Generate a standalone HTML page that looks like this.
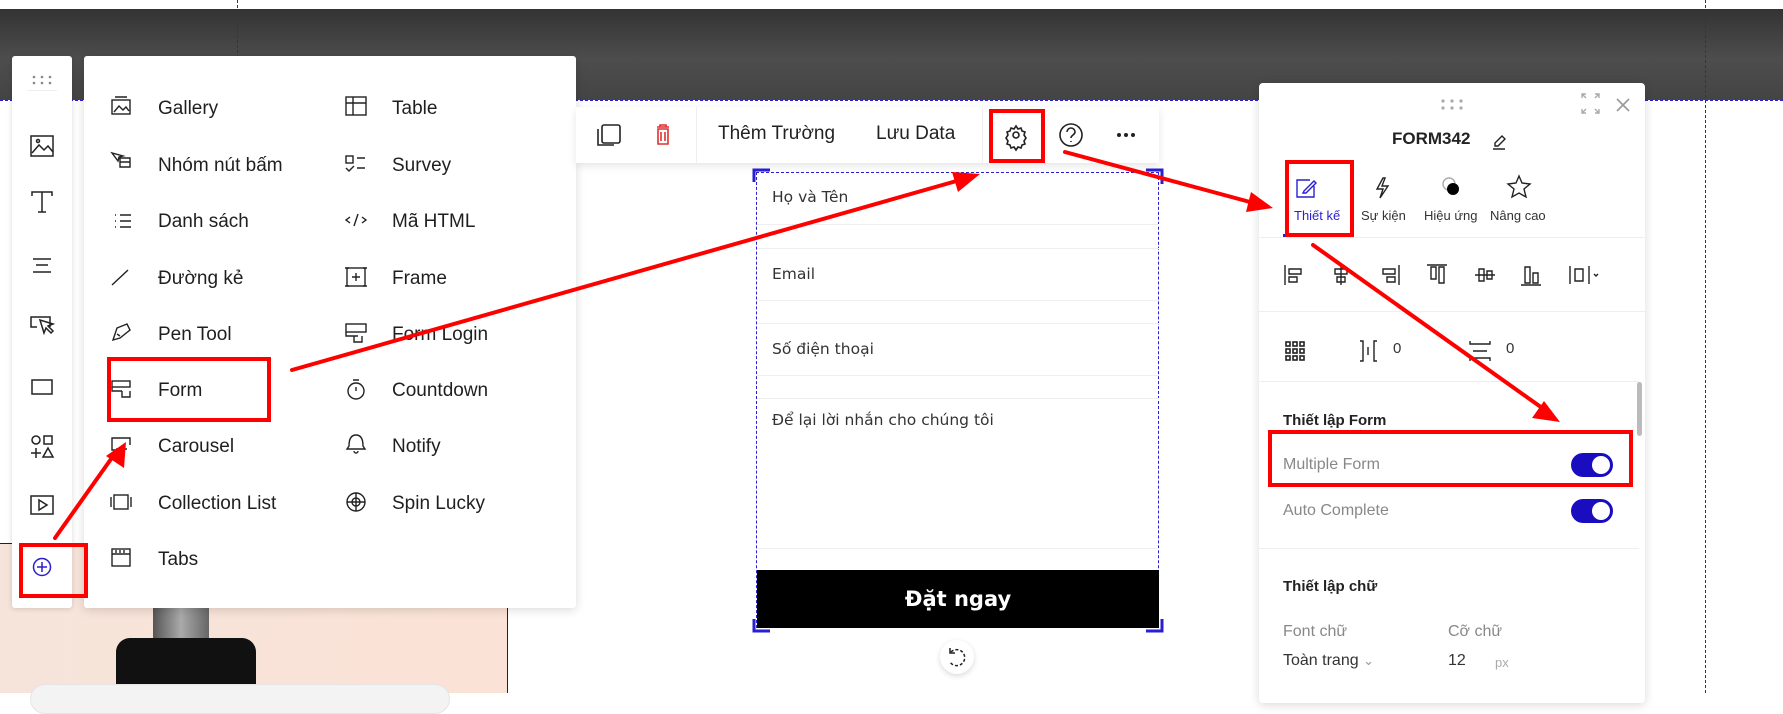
<!DOCTYPE html>
<html><head><meta charset="utf-8">
<style>
*{margin:0;padding:0;box-sizing:border-box}
body{width:1783px;height:693px;overflow:hidden;background:#fff;position:relative;font-family:"Liberation Sans",sans-serif;color:#222}
.a{position:absolute}
.mi{position:absolute;font-size:19px;color:#1f1f1f;line-height:22px}
.ff{position:absolute;left:772px;font-family:"DejaVu Sans","Liberation Sans",sans-serif;font-size:15.5px;color:#333}
.hl{position:absolute;left:757px;width:402px;height:1px;background:#eee}
.tl{position:absolute;font-size:13px;color:#333;top:208px}
.gr{color:#888}
</style></head><body>
<div class="a" style="left:0;top:9px;width:1783px;height:91px;background:linear-gradient(180deg,#333,#4d4d4d 55%,#444)"></div>
<div class="a" style="left:0;top:100px;width:1783px;border-top:1px dashed #2a1fd0"></div>
<div class="a" style="left:237px;top:0;height:693px;border-left:1px dashed #2a1fd0"></div>
<div class="a" style="left:1705px;top:0;height:693px;border-left:1px dashed #2a1fd0"></div>
<div class="a" style="left:0;top:543px;width:508px;height:150px;background:linear-gradient(90deg,#f6e4da,#fbe2d6);border-top:1px solid #222;border-right:1px solid #222"></div>
<div class="a" style="left:153px;top:606px;width:56px;height:32px;background:linear-gradient(90deg,#555,#aaa,#666)"></div>
<div class="a" style="left:116px;top:638px;width:140px;height:60px;background:#111;border-radius:14px 14px 0 0"></div>
<div class="a" style="left:30px;top:684px;width:420px;height:30px;background:#f3f3f3;border-radius:16px;border:1px solid #e5e5e5"></div>
<div class="a" style="left:12px;top:56px;width:60px;height:552px;background:#fff;border-radius:3px;box-shadow:0 1px 6px rgba(0,0,0,.15)"></div>
<div class="a" style="left:27px;top:90px;width:30px;height:1px;background:#eee"></div>
<svg class="a" style="left:0;top:0" width="90" height="600" fill="none" stroke="#222" stroke-width="1.5">
<g fill="#888" stroke="none"><circle cx="34" cy="77" r="1.3"/><circle cx="42" cy="77" r="1.3"/><circle cx="50" cy="77" r="1.3"/><circle cx="34" cy="83" r="1.3"/><circle cx="42" cy="83" r="1.3"/><circle cx="50" cy="83" r="1.3"/></g>
<rect x="31" y="136" width="22" height="20"/><path d="M32 153l7-8 5 5 4-4 5 6"/><circle cx="38" cy="141" r="1.5"/>
<path d="M32 196v-4h20v4M42 192v20M38 212h8"/>
<path d="M33 259h18M36 265h12M33 272h18"/>
<path d="M50 327v-10H31v10h6M40 320l4 13 2-5 5 5 2-2-5-5 5-2z"/>
<rect x="32" y="380" width="20" height="14"/>
<circle cx="36" cy="440" r="4"/><rect x="44" y="436" width="8" height="8"/><path d="M31 453h10M36 448v10M48 448l-5 9h10z"/>
<rect x="31" y="496" width="22" height="18"/><path d="M39 500v10l8-5z"/>
<circle cx="42" cy="567" r="8.5" stroke="#2a1fd0"/><path d="M42 562v10M37 567h10" stroke="#2a1fd0"/>
</svg>
<div class="a" style="left:84px;top:56px;width:492px;height:552px;background:#fff;border-radius:3px;box-shadow:0 2px 10px rgba(0,0,0,.15)"></div>
<svg class="a" style="left:110px;top:90px" width="300" height="490" fill="none" stroke="#222" stroke-width="1.4">
<rect x="2" y="10" width="18" height="14"/><path d="M5 7h12M4 22l5-6 4 4 3-3 3 4"/>
<path d="M2 63l6 8 1-4 4-1zM10 68h10v9H10zM10 72h10"/>
<path d="M5 125h1M5 131h1M5 137h1M10 125h11M10 131h11M10 137h11" stroke-width="1.6"/>
<path d="M2 195l16-15"/>
<path d="M3 250l4-12 10-4 3 6-10 8zM7 244l3 2"/>
<rect x="2" y="291" width="18" height="6"/><path d="M2 297v4h10M12 301v6h8v-6"/>
<path d="M20 355v-7H2v12h4M6 359h2M11 359h2M15 359h2"/>
<rect x="4" y="405" width="14" height="14"/><path d="M1 407v10M21 407v10"/>
<rect x="2" y="459" width="18" height="17"/><path d="M2 464h18M6 460v3M10 460v3M14 460v3"/>
</svg>
<svg class="a" style="left:344px;top:90px" width="40" height="490" fill="none" stroke="#222" stroke-width="1.4">
<rect x="2" y="7" width="20" height="18"/><path d="M2 13h20M9 7v18"/>
<rect x="2" y="66" width="7" height="7"/><path d="M13 68h8M13 78h8M2 78l3 3 5-5"/>
<path d="M6 127l-4 3 4 3M18 127l4 3-4 3M14 124l-4 12"/>
<rect x="3" y="178" width="18" height="18"/><path d="M12 183v8M8 187h8M1 178h4M19 178h4M1 196h4M19 196h4"/>
<rect x="2" y="234" width="20" height="8"/><path d="M2 242v4h12M10 246v6h8v-6"/>
<circle cx="12" cy="301" r="8"/><path d="M9 290h6M12 297v4"/>
<path d="M5 356c0-8 3-11 7-11s7 3 7 11l2 3H3zM10 361a2 2 0 004 0"/>
<circle cx="12" cy="412" r="9"/><circle cx="12" cy="412" r="4"/><path d="M3 412h18M12 403v18"/>
</svg>
<div class="mi" style="left:158px;top:98px">Gallery</div>
<div class="mi" style="left:158px;top:155px">Nhóm nút bấm</div>
<div class="mi" style="left:158px;top:211px">Danh sách</div>
<div class="mi" style="left:158px;top:268px">Đường kẻ</div>
<div class="mi" style="left:158px;top:324px">Pen Tool</div>
<div class="mi" style="left:158px;top:380px">Form</div>
<div class="mi" style="left:158px;top:436px">Carousel</div>
<div class="mi" style="left:158px;top:493px">Collection List</div>
<div class="mi" style="left:158px;top:549px">Tabs</div>
<div class="mi" style="left:392px;top:98px">Table</div>
<div class="mi" style="left:392px;top:155px">Survey</div>
<div class="mi" style="left:392px;top:211px">Mã HTML</div>
<div class="mi" style="left:392px;top:268px">Frame</div>
<div class="mi" style="left:392px;top:324px">Form Login</div>
<div class="mi" style="left:392px;top:380px">Countdown</div>
<div class="mi" style="left:392px;top:436px">Notify</div>
<div class="mi" style="left:392px;top:493px">Spin Lucky</div>
<div class="a" style="left:576px;top:107px;width:583px;height:56px;background:#fff;box-shadow:0 3px 8px rgba(0,0,0,.1)"></div>
<div class="a" style="left:696px;top:107px;width:1px;height:56px;background:#eee"></div>
<div class="a" style="left:982px;top:107px;width:1px;height:56px;background:#eee"></div>
<svg class="a" style="left:590px;top:115px" width="570" height="40" fill="none" stroke="#222" stroke-width="1.6">
<rect x="12" y="10" width="18" height="18" rx="2"/><path d="M8 14v16h16"/>
<path d="M67 12h12M70 12v-2h6v2M68 14h10v15H68zM71 17v9M75 17v9" stroke="#e03030"/>
<circle cx="426" cy="20" r="3"/><path d="M426 11l2 3 3-1 1 3 3 1-1 3 2 3-2 3 1 3-3 1-1 3-3-1-2 3-2-3-3 1-1-3-3-1 1-3-2-3 2-3-1-3 3-1 1-3 3 1z"/>
<circle cx="481" cy="20" r="11"/><path d="M477 17a4 4 0 118 0c0 3-4 3-4 6M481 26v1"/>
<g fill="#222" stroke="none"><circle cx="529" cy="20" r="2"/><circle cx="536" cy="20" r="2"/><circle cx="543" cy="20" r="2"/></g>
</svg>
<div class="a" style="left:718px;top:123px;font-size:19px">Thêm Trường</div>
<div class="a" style="left:876px;top:123px;font-size:19px">Lưu Data</div>
<div class="a" style="left:756px;top:172px;width:403px;height:456px;border:1px dashed #2a1fd0;background:#fff"></div>
<div class="ff" style="top:188px">Họ và Tên</div>
<div class="hl" style="top:224px"></div><div class="hl" style="top:248px"></div>
<div class="ff" style="top:265px">Email</div>
<div class="hl" style="top:300px"></div><div class="hl" style="top:323px"></div>
<div class="ff" style="top:340px">Số điện thoại</div>
<div class="hl" style="top:375px"></div><div class="hl" style="top:398px"></div>
<div class="ff" style="top:411px">Để lại lời nhắn cho chúng tôi</div>
<div class="hl" style="top:548px"></div>
<div class="a" style="left:757px;top:570px;width:402px;height:58px;background:#000;color:#fff;font-family:'DejaVu Sans',sans-serif;font-weight:bold;font-size:21px;text-align:center;line-height:58px">Đặt ngay</div>
<svg class="a" style="left:752px;top:168px" width="412" height="465" fill="none" stroke="#2a1fd0" stroke-width="3">
<path d="M2 14V2h16M394 2h16v14M2 451v12h16M394 463h16v-12"/></svg>
<div class="a" style="left:940px;top:640px;width:34px;height:34px;border-radius:50%;background:#fff;box-shadow:0 2px 6px rgba(0,0,0,.15)"></div>
<svg class="a" style="left:940px;top:640px" width="34" height="34" fill="none" stroke="#222" stroke-width="1.5"><path d="M11 12a8 8 0 11-1 10" stroke-dasharray="3 2"/><path d="M10 8v5h5"/></svg>
<div class="a" style="left:1259px;top:83px;width:386px;height:620px;background:#fff;border-radius:4px;box-shadow:0 2px 10px rgba(0,0,0,.15)"></div>
<svg class="a" style="left:1259px;top:83px" width="386" height="300" fill="none" stroke="#222" stroke-width="1.4">
<g fill="#aaa" stroke="none"><circle cx="184" cy="18" r="1.6"/><circle cx="193" cy="18" r="1.6"/><circle cx="202" cy="18" r="1.6"/><circle cx="184" cy="25" r="1.6"/><circle cx="193" cy="25" r="1.6"/><circle cx="202" cy="25" r="1.6"/></g>
<path d="M323 15v-4h4M336 11h4v4M323 26v4h4M340 26v4h-4M323 11l4 4M340 11l-4 4M323 30l4-4M340 30l-4-4" stroke="#aaa"/>
<path d="M358 16l12 12M370 16l-12 12" stroke="#999" stroke-width="1.6"/>
<path d="M236 60l7-7 3 3-7 7h-3zM234 66h12"/>
<path d="M51 97H38v17h17v-11M45 108l10-10 2 2-10 10h-3z" stroke="#2a1fd0"/>
<path d="M124 95l-6 11h6l-3 9 8-12h-6l3-8z"/>
<circle cx="190" cy="101" r="6" stroke="#aaa"/><circle cx="194" cy="106" r="6" fill="#000" stroke="none"/>
<path d="M260 93l3 7 8 1-6 5 2 8-7-4-7 4 2-8-6-5 8-1z"/>
</svg>
<div class="a" style="left:1392px;top:129px;font-size:17px;font-weight:bold;color:#222">FORM342</div>
<div class="tl" style="left:1294px;color:#2a1fd0">Thiết kế</div>
<div class="tl" style="left:1361px">Sự kiện</div>
<div class="tl" style="left:1424px">Hiệu ứng</div>
<div class="tl" style="left:1490px">Nâng cao</div>
<div class="a" style="left:1283px;top:234px;width:6px;height:3px;background:#2a1fd0"></div>
<div class="a" style="left:1259px;top:237px;width:386px;height:1px;background:#eee"></div>
<div class="a" style="left:1259px;top:311px;width:386px;height:1px;background:#eee"></div>
<div class="a" style="left:1259px;top:381px;width:380px;height:1px;background:#eee"></div>
<svg class="a" style="left:1259px;top:255px" width="386" height="110" fill="none" stroke="#222" stroke-width="1.4">
<path d="M26 10v20M30 14h12v5H30zM30 22h8v5h-8z"/>
<path d="M82 10v20M76 14h12v5H76zM78 22h8v5h-8z"/>
<path d="M140 10v20M124 14h12v5h-12zM128 22h8v5h-8z"/>
<path d="M168 10h20M172 12h5v12h-5zM180 12h5v16h-5z"/>
<path d="M216 20h20M220 14h5v12h-5zM228 16h5v8h-5z"/>
<path d="M262 30h20M266 12h5v16h-5zM274 18h5v10h-5z"/>
<path d="M311 11v18M330 11v18M316 14h8v12h-8zM335 19l2 2 2-2"/>
<g stroke-width="1.6"><rect x="27" y="87" width="4" height="4"/><rect x="34" y="87" width="4" height="4"/><rect x="41" y="87" width="4" height="4"/><rect x="27" y="94" width="4" height="4"/><rect x="34" y="94" width="4" height="4"/><rect x="41" y="94" width="4" height="4"/><rect x="27" y="101" width="4" height="4"/><rect x="34" y="101" width="4" height="4"/><rect x="41" y="101" width="4" height="4"/></g>
<path d="M101 86h3v20h-3M109 92v8M118 86h-3v20h3"/>
<path d="M211 86v3h20v-3M214 96h14M211 106v-3h20v3"/>
</svg>
<div class="a" style="left:1393px;top:340px;font-size:15px;color:#333">0</div>
<div class="a" style="left:1506px;top:340px;font-size:15px;color:#333">0</div>
<div class="a" style="left:1637px;top:382px;width:5px;height:54px;background:#bbb;border-radius:3px"></div>
<div class="a" style="left:1283px;top:412px;font-size:15px;font-weight:bold">Thiết lập Form</div>
<div class="a gr" style="left:1283px;top:456px;font-size:16px">Multiple Form</div>
<div class="a gr" style="left:1283px;top:502px;font-size:16px">Auto Complete</div>
<div class="a" style="left:1571px;top:453px;width:42px;height:24px;border-radius:12px;background:#1a0dbf"></div>
<div class="a" style="left:1592px;top:456px;width:18px;height:18px;border-radius:50%;background:#fff"></div>
<div class="a" style="left:1571px;top:499px;width:42px;height:24px;border-radius:12px;background:#1a0dbf"></div>
<div class="a" style="left:1592px;top:502px;width:18px;height:18px;border-radius:50%;background:#fff"></div>
<div class="a" style="left:1259px;top:548px;width:380px;height:1px;background:#eee"></div>
<div class="a" style="left:1283px;top:578px;font-size:15px;font-weight:bold">Thiết lập chữ</div>
<div class="a gr" style="left:1283px;top:623px;font-size:16px">Font chữ</div>
<div class="a gr" style="left:1448px;top:623px;font-size:16px">Cỡ chữ</div>
<div class="a" style="left:1283px;top:652px;font-size:16px;color:#333">Toàn trang <span style="color:#999;font-size:13px">&#8964;</span></div>
<div class="a" style="left:1448px;top:652px;font-size:16px;color:#333">12</div>
<div class="a" style="left:1495px;top:655px;font-size:13px;color:#aaa">px</div>
<svg class="a" style="left:0;top:0" width="1783" height="693" fill="none" stroke="#f00" stroke-width="4">
<rect x="21" y="545" width="65" height="51"/>
<rect x="109" y="359" width="160" height="61"/>
<rect x="991" y="111" width="52" height="50"/>
<rect x="1287" y="162" width="65" height="73"/>
<rect x="1270" y="432" width="361" height="53"/>
<g stroke-linecap="round"><path d="M55 538L116 452"/><path d="M292 370L960 180"/><path d="M1065 152L1250 202"/><path d="M1313 245L1545 410"/></g>
<g fill="#f00" stroke="none">
<path d="M126 442l-2 26-18-12z"/>
<path d="M980 174l-22 18-6-20z"/>
<path d="M1273 208l-27 4 5-20z"/>
<path d="M1560 422l-28-4 12-17z"/>
</g>
</svg>
</body></html>
